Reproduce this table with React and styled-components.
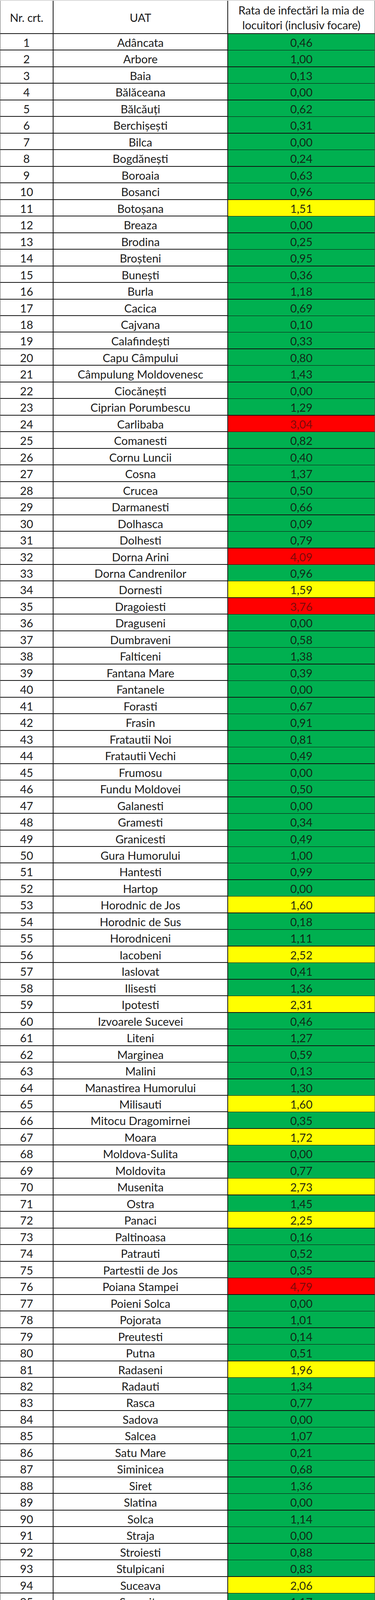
import React from 'react';
import styled, { createGlobalStyle, css } from 'styled-components';

const GlobalStyle = createGlobalStyle`
    html, body {
        margin: 0;
        padding: 0;
        background: #d9d9d9;
    }
    body {
        font-family: Lato, "Liberation Sans", sans-serif;
        color: #1b1b1b;
    }
`;

const ROW_H = 42.48;

const UATS = [
    ['Adâncata', '0,46'], ['Arbore', '1,00'], ['Baia', '0,13'], ['Bălăceana', '0,00'],
    ['Bălcăuți', '0,62'], ['Berchișești', '0,31'], ['Bilca', '0,00'], ['Bogdănești', '0,24'],
    ['Boroaia', '0,63'], ['Bosanci', '0,96'], ['Botoșana', '1,51'], ['Breaza', '0,00'],
    ['Brodina', '0,25'], ['Broșteni', '0,95'], ['Bunești', '0,36'], ['Burla', '1,18'],
    ['Cacica', '0,69'], ['Cajvana', '0,10'], ['Calafindești', '0,33'], ['Capu Câmpului', '0,80'],
    ['Câmpulung Moldovenesc', '1,43'], ['Ciocănești', '0,00'], ['Ciprian Porumbescu', '1,29'], ['Carlibaba', '3,04'],
    ['Comanesti', '0,82'], ['Cornu Luncii', '0,40'], ['Cosna', '1,37'], ['Crucea', '0,50'],
    ['Darmanesti', '0,66'], ['Dolhasca', '0,09'], ['Dolhesti', '0,79'], ['Dorna Arini', '4,09'],
    ['Dorna Candrenilor', '0,96'], ['Dornesti', '1,59'], ['Dragoiesti', '3,76'], ['Draguseni', '0,00'],
    ['Dumbraveni', '0,58'], ['Falticeni', '1,38'], ['Fantana Mare', '0,39'], ['Fantanele', '0,00'],
    ['Forasti', '0,67'], ['Frasin', '0,91'], ['Fratautii Noi', '0,81'], ['Fratautii Vechi', '0,49'],
    ['Frumosu', '0,00'], ['Fundu Moldovei', '0,50'], ['Galanesti', '0,00'], ['Gramesti', '0,34'],
    ['Granicesti', '0,49'], ['Gura Humorului', '1,00'], ['Hantesti', '0,99'], ['Hartop', '0,00'],
    ['Horodnic de Jos', '1,60'], ['Horodnic de Sus', '0,18'], ['Horodniceni', '1,11'], ['Iacobeni', '2,52'],
    ['Iaslovat', '0,41'], ['Ilisesti', '1,36'], ['Ipotesti', '2,31'], ['Izvoarele Sucevei', '0,46'],
    ['Liteni', '1,27'], ['Marginea', '0,59'], ['Malini', '0,13'], ['Manastirea Humorului', '1,30'],
    ['Milisauti', '1,60'], ['Mitocu Dragomirnei', '0,35'], ['Moara', '1,72'], ['Moldova-Sulita', '0,00'],
    ['Moldovita', '0,77'], ['Musenita', '2,73'], ['Ostra', '1,45'], ['Panaci', '2,25'],
    ['Paltinoasa', '0,16'], ['Patrauti', '0,52'], ['Partestii de Jos', '0,35'], ['Poiana Stampei', '4,79'],
    ['Poieni Solca', '0,00'], ['Pojorata', '1,01'], ['Preutesti', '0,14'], ['Putna', '0,51'],
    ['Radaseni', '1,96'], ['Radauti', '1,34'], ['Rasca', '0,77'], ['Sadova', '0,00'],
    ['Salcea', '1,07'], ['Satu Mare', '0,21'], ['Siminicea', '0,68'], ['Siret', '1,36'],
    ['Slatina', '0,00'], ['Solca', '1,14'], ['Straja', '0,00'], ['Stroiesti', '0,88'],
    ['Stulpicani', '0,83'], ['Suceava', '2,06'], ['Sucevita', '1,17'], ['Șaru Dornei', '1,91'],
    ['Șcheia', '1,63'], ['Șerbauti', '0,90'], ['Todiresti', '1,07'], ['Udesti', '0,48'],
    ['Ulma', '0,00'], ['Vadu Moldovei', '0,44'], ['Valea Moldovei', '0,42'], ['Vama', '0,00'],
    ['Vatra Dornei', '3,64'], ['Vatra Moldovitei', '0,68'], ['Veresti', '0,13'], ['Vicovu de Jos', '0,00'],
    ['Vicovu de Sus', '0,57'], ['Voitinel', '0,00'], ['Volovat', '0,32'], ['Vulturesti', '0,28'],
    ['Zamostea', '0,66'], ['Zvoristea', '1,45'],
];

const levelOf = value => {
    const v = parseFloat(value.replace(',', '.'));
    if (v >= 3) return 'red';
    if (v >= 1.5) return 'yellow';
    return 'green';
};

const Sheet = styled.div`
    width: 958px;
    margin-top: 2px;
    background: #ffffff;
    border-left: 1px solid #555;
    border-right: 2px solid #4a4a4a;
`;

const Row = styled.div`
    display: grid;
    grid-template-columns: 136px 447px 1fr;
    height: ${ROW_H}px;
    box-sizing: border-box;
    border-bottom: 2px solid #121212;

    ${props => props.$header && css`
        height: 85px;
    `}

    ${props => props.$total && css`
        height: 44px;
        border-bottom: none;
    `}
`;

const Cell = styled.div`
    display: flex;
    align-items: center;
    justify-content: center;
    text-align: center;
    box-sizing: border-box;
    padding-top: 3px;
    font-size: 29px;
    line-height: 38px;
    white-space: nowrap;
    border-right: 2px solid #121212;

    &:last-child {
        border-right: none;
    }
`;

const HeaderCell = styled(Cell)`
    padding-top: 2px;
    white-space: normal;
    letter-spacing: -0.2px;
`;

const fills = {
    green: css`background: #00b050; color: #102a18;`,
    yellow: css`background: #ffff00; color: #2a2a10;`,
    red: css`background: #ff0000; color: #7e0a0a;`,
};

const RateCell = styled(Cell)`
    ${props => fills[props.$level]}
`;

const TotalCell = styled(Cell)`
    background: #f6b98a;
    color: #2e1d12;
    border: 2px solid #121212;
    outline: 2px solid #121212;
    padding-top: 1px;

    &:last-child {
        border-right: 2px solid #121212;
    }
`;

function DataRow({ index, name, value }) {
    return (
        <Row>
            <Cell>{index}</Cell>
            <Cell>{name}</Cell>
            <RateCell $level={levelOf(value)}>{value}</RateCell>
        </Row>
    );
}

export default function App() {
    return (
        <>
            <GlobalStyle />
            <Sheet>
                <Row $header>
                    <HeaderCell>Nr. crt.</HeaderCell>
                    <HeaderCell>UAT</HeaderCell>
                    <HeaderCell>Rata de infectări la mia de<br />locuitori (inclusiv focare)</HeaderCell>
                </Row>
                {UATS.map(([name, value], i) => (
                    <DataRow key={name} index={i + 1} name={name} value={value} />
                ))}
                <Row $total>
                    <Cell></Cell>
                    <Cell>Total</Cell>
                    <TotalCell>1,11</TotalCell>
                </Row>
            </Sheet>
        </>
    );
}
